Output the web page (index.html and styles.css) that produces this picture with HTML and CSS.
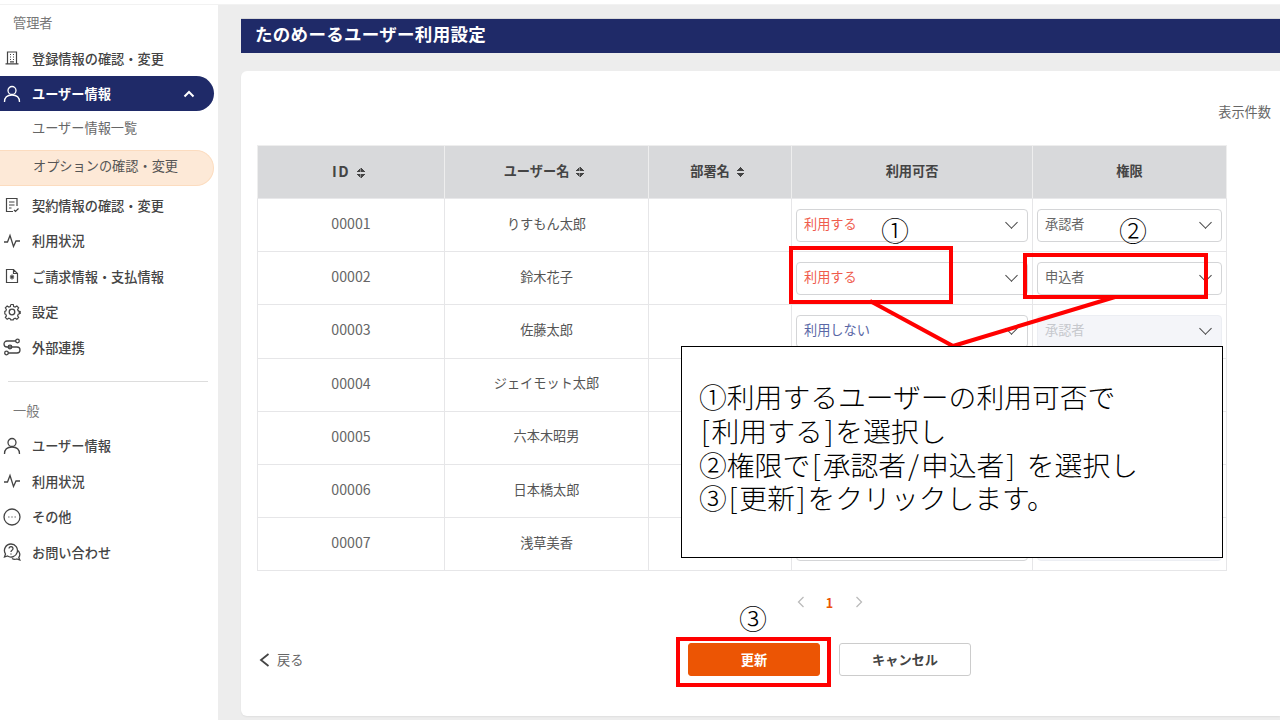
FILE: index.html
```html
<!DOCTYPE html>
<html lang="ja">
<head>
<meta charset="utf-8">
<title>たのめーるユーザー利用設定</title>
<link rel="stylesheet" href="styles.css">
</head>
<body>
<div class="topbar"></div>
<div class="shell">
  <aside class="sidebar">
    <div class="nav-head">管理者</div>
    <a class="nav-item"><svg class="ico" viewBox="0 0 16 16"><path d="M3.500 13.500V2h9v11.500M1.500 13.800h13M6 4.500h1M9 4.500h1M6 7h1M9 7h1M6 9.500h1M9 9.500h1M6 11.800h4"/></svg>登録情報の確認・変更</a>
    <a class="nav-item active"><svg class="ico ico-l" viewBox="0 0 18 18"><circle cx="9" cy="5.500" r="4"/><path d="M1.500 17c0-4.500 3-7 7.500-7s7.500 2.500 7.500 7"/></svg>ユーザー情報<svg class="chev" viewBox="0 0 12 8"><path d="M1.500 6.500 6 2l4.500 4.500"/></svg></a>
    <a class="nav-sub">ユーザー情報一覧</a>
    <a class="nav-sub current">オプションの確認・変更</a>
    <a class="nav-item"><svg class="ico" viewBox="0 0 16 16"><path d="M13 9V1.500H2.500v13H9M5 5h5.500M5 8h5.500M5 11h2.500M10 13l1.500 1.500L14.500 11.500"/></svg>契約情報の確認・変更</a>
    <a class="nav-item"><svg class="ico ico-l" viewBox="0 0 18 18"><path d="M1 10h3.500L7 3.500l3.500 11L13 9h4"/></svg>利用状況</a>
    <a class="nav-item"><svg class="ico" viewBox="0 0 16 16"><path d="M2.500 1.500h7l4 4v9h-11zM9.500 1.500v4h4M8 6.500v5M6 7.800l4 2.400M10 7.800l-4 2.400"/></svg>ご請求情報・支払情報</a>
    <a class="nav-item"><svg class="ico ico-l" viewBox="0 0 18 18"><circle cx="9" cy="9" r="2.800"/><path d="M7.600 1.200h2.800l.4 2.200 1.700.7 1.900-1.200 2 2-1.200 1.900.7 1.700 2.200.4v2.800M16.300 7.800l.4 0M7.600 1.200l-.4 2.200-1.700.7-1.900-1.200-2 2 1.200 1.900-.7 1.700-1.100.4v2.800l1.100.4.700 1.700-1.200 1.900 2 2 1.900-1.200 1.700.7.400 1.100h2.800l.4-1.100 1.700-.7 1.900 1.200 2-2-1.200-1.900.7-1.700 1.100-.4v-2.800" transform="translate(0.900 0.400) scale(.9)"/></svg>設定</a>
    <a class="nav-item"><svg class="ico ico-l" viewBox="0 0 18 18"><path d="M13 3H4a2.500 2.500 0 0 0 0 6h10a2.500 2.500 0 0 1 0 6H5"/><circle cx="14.500" cy="3" r="1.800"/><circle cx="7" cy="9" r="1.800"/><circle cx="3.500" cy="15" r="1.800"/></svg>外部連携</a>
    <hr class="nav-rule">
    <div class="nav-head">一般</div>
    <a class="nav-item"><svg class="ico ico-l" viewBox="0 0 18 18"><circle cx="9" cy="5.500" r="4"/><path d="M1.500 17c0-4.500 3-7 7.500-7s7.500 2.500 7.500 7"/></svg>ユーザー情報</a>
    <a class="nav-item"><svg class="ico ico-l" viewBox="0 0 18 18"><path d="M1 10h3.500L7 3.500l3.500 11L13 9h4"/></svg>利用状況</a>
    <a class="nav-item"><svg class="ico ico-l" viewBox="0 0 18 18"><circle cx="9" cy="9" r="8"/><path d="M5.500 9h.8M8.600 9h.8M11.700 9h.8"/></svg>その他</a>
    <a class="nav-item"><svg class="ico ico-l" viewBox="0 0 18 18"><path d="M8 1a6.500 6.500 0 0 0-5.500 10L1.500 14l3-1A6.500 6.500 0 1 0 8 1zM14.800 7.500a5 5 0 0 1 1 7l1 2.500-3-1a5 5 0 0 1-4.800-.5M6 5.500a2 2 0 1 1 3 1.800c-.7.400-1 .8-1 1.700M8 10.500v1"/></svg>お問い合わせ</a>
  </aside>

  <main class="main">
    <h1 class="banner">たのめーるユーザー利用設定</h1>
    <section class="card">
      <div class="toolbar"><span class="count-label">表示件数</span></div>
      <table class="users">
        <colgroup><col class="c-id"><col class="c-name"><col class="c-dept"><col class="c-use"><col class="c-role"></colgroup>
        <thead>
          <tr>
            <th><span class="id-label">ID</span><span class="sort"></span></th>
            <th>ユーザー名<span class="sort"></span></th>
            <th>部署名<span class="sort"></span></th>
            <th>利用可否</th>
            <th>権限</th>
          </tr>
        </thead>
        <tbody>
          <tr><td>00001</td><td>りすもん太郎</td><td></td><td><div class="select on">利用する</div></td><td><div class="select">承認者</div></td></tr>
          <tr><td>00002</td><td>鈴木花子</td><td></td><td><div class="select on">利用する</div></td><td><div class="select">申込者</div></td></tr>
          <tr><td>00003</td><td>佐藤太郎</td><td></td><td><div class="select off">利用しない</div></td><td><div class="select dis">承認者</div></td></tr>
          <tr><td>00004</td><td>ジェイモット太郎</td><td></td><td><div class="select off">利用しない</div></td><td><div class="select dis">承認者</div></td></tr>
          <tr><td>00005</td><td>六本木昭男</td><td></td><td><div class="select off">利用しない</div></td><td><div class="select dis">承認者</div></td></tr>
          <tr><td>00006</td><td>日本橋太郎</td><td></td><td><div class="select off">利用しない</div></td><td><div class="select dis">承認者</div></td></tr>
          <tr><td>00007</td><td>浅草美香</td><td></td><td><div class="select off">利用しない</div></td><td><div class="select dis">承認者</div></td></tr>
        </tbody>
      </table>
      <nav class="pager">
        <svg class="pg" viewBox="0 0 8 12"><path d="M6.500 1 1.500 6l5 5"/></svg>
        <span class="pg-num">1</span>
        <svg class="pg" viewBox="0 0 8 12"><path d="M1.500 1l5 5-5 5"/></svg>
      </nav>
      <div class="actions">
        <a class="back"><svg class="back-ico" viewBox="0 0 11 14"><path d="M9.500 1 2 7l7.500 6"/></svg>戻る</a>
        <button class="btn primary">更新</button>
        <button class="btn">キャンセル</button>
      </div>
    </section>
  </main>
</div>

<svg class="marks" viewBox="0 0 1280 720">
  <path d="M870 301 953 346 1115 297"/>
  <rect x="791" y="248" width="160" height="54"/>
  <rect x="1025" y="255" width="181" height="42"/>
  <rect x="678" y="639" width="151" height="46"/>
</svg>
<span class="num n1">①</span>
<span class="num n2">②</span>
<span class="num n3">③</span>
<div class="callout">①利用するユーザーの利用可否で<br><span class="sym">[</span>利用する<span class="sym">]</span>を選択し<br>②権限で<span class="sym">[</span>承認者<span class="sym">/</span>申込者<span class="sym">]</span><span class="sym"> </span>を選択し<br>③<span class="sym">[</span>更新<span class="sym">]</span>をクリックします。</div>
</body>
</html>
```
FILE: styles.css
```css
* { box-sizing: border-box; }
html, body { margin: 0; height: 720px; overflow: hidden; }
body {
  background: #ededed;
  font-family: "Noto Sans CJK JP", "Noto Sans", sans-serif;
  font-size: 13.2px;
  color: #444;
}
.topbar { height: 5px; background: #fff; border-bottom: 1px solid #f2f2f2; }
.shell { display: flex; height: 715px; }

/* sidebar */
.sidebar { width: 218px; flex: none; background: #fff; padding-right: 4px; }
.nav-head { height: 35.500px; line-height: 35.500px; padding-left: 13px; color: #777; font-size: 13.200px; }
.nav-item {
  display: flex; align-items: center;
  height: 35.400px; padding: 0 0 0 4px;
  font-weight: 500; color: #444;
}
.ico { width: 16px; height: 16px; flex: none; margin-right: 12px; fill: none; stroke: #444; stroke-width: 1.200; }
.ico-l { width: 18px; height: 18px; margin-left: -1px; margin-right: 11px; stroke-width: 1.300; }
.nav-item.active {
  background: #1f2a68; color: #fff; font-weight: 700;
  border-radius: 0 18px 18px 0;
  position: relative;
}
.nav-item.active .ico { stroke: #fff; }
.chev { width: 12px; height: 8px; position: absolute; right: 19px; top: 14px; fill: none; stroke: #fff; stroke-width: 2; }
.nav-sub {
  display: flex; align-items: center;
  height: 34px; padding: 0 0 2px 32px; color: #666;
}
.nav-sub.current {
  height: 35.500px; margin-top: 5px; margin-bottom: 2px;
  padding: 0 0 5px 33px;
  background: #fde9d7; border: 1px solid #fcdcbf; border-left: 0;
  border-radius: 0 18px 18px 0; color: #555;
}
.nav-rule { border: 0; border-top: 1px solid #ddd; margin: 16px 6px 11px 8px; }

/* main */
.main { flex: 1; min-width: 0; padding: 13px 0 0 23px; }
.banner {
  margin: 0; height: 35px; line-height: 29px; padding-left: 14px;
  background: #1f2a68; color: #fff;
  font-size: 17.500px; font-weight: 700; letter-spacing: .3px;
  border-top: 1px solid #d8d8d8;
}
.card {
  margin-top: 18px; height: 645px;
  background: #fff; border-radius: 6px 0 0 6px;
  padding: 0 0 0 16px;
  box-shadow: 0 1px 2px rgba(0,0,0,.06);
}
.toolbar { height: 74px; display: flex; justify-content: flex-end; padding: 31px 9px 0 0; color: #666; }
.count-label { line-height: 19px; }

/* table */
.users { width: 969px; table-layout: fixed; border-collapse: collapse; text-align: center; }
.c-id { width: 187px; } .c-name { width: 204px; } .c-dept { width: 143px; } .c-use { width: 241px; } .c-role { width: 194px; }
.users th {
  height: 53px; background: #d8d9db; color: #444; font-weight: 700;
  border: 1px solid #eee; border-bottom-color: #e8e8ea; padding: 0 0 4px;
}
.users td {
  height: 53.200px; padding: 0 4px; color: #555;
  border: 1px solid #e6e6e8;
}
.users td:nth-child(-n+2) { padding-bottom: 4px; }
.users td:first-child { font-size: 14.200px; color: #666; }
.id-label { font-size: 14.500px; letter-spacing: 1.500px; }
.sort { display: inline-block; width: 9px; height: 10px; margin: 0 5px 0 6px; vertical-align: -1px;
  background:
    linear-gradient(to bottom right, transparent 50%, #444 50%) 0 0 / 4.500px 4px no-repeat,
    linear-gradient(to bottom left, transparent 50%, #444 50%) 4.500px 0 / 4.500px 4px no-repeat,
    linear-gradient(to top right, transparent 50%, #444 50%) 0 6px / 4.500px 4px no-repeat,
    linear-gradient(to top left, transparent 50%, #444 50%) 4.500px 6px / 4.500px 4px no-repeat;
}
.select {
  position: relative; height: 33px; line-height: 27px; padding-left: 7px; text-align: left;
  background: #fff; border: 1.500px solid #d4d5d7; border-radius: 4px; color: #666;
}
.select::after {
  content: ""; position: absolute; right: 11px; top: 8px; width: 8px; height: 8px;
  border-right: 1.500px solid #444; border-bottom: 1.500px solid #444; transform: rotate(45deg);
}
.select.on { color: #ef5b4c; }
.select.off { color: #5a67a6; }
.select.dis { background: #f4f5f9; color: #c6c8cd; border-color: #eceef3; }

/* footer */
.pager { display: flex; align-items: center; justify-content: center; gap: 21px; width: 1145px; height: 22px; margin-top: 20px; }
.pg { width: 8px; height: 12px; fill: none; stroke: #bbb; stroke-width: 1.300; }
.pg-num { color: #ec5504; font-weight: 700; font-size: 12.500px; width: 8px; text-align: center; }
.actions { display: flex; align-items: center; margin-top: 30px; height: 33px; }
.back { display: flex; align-items: center; color: #666; margin-left: 2px; width: 429px; }
.back-ico { width: 11px; height: 14px; margin-right: 7px; fill: none; stroke: #444; stroke-width: 1.800; }
.btn {
  width: 132px; height: 33px; padding: 0; margin-right: 19px;
  font: 700 13.200px "Noto Sans CJK JP", sans-serif; color: #444;
  background: #fff; border: 1px solid #ccc; border-radius: 3px;
}
.btn.primary { background: #ec5504; border-color: #ec5504; color: #fff; }

/* annotations laid over the screenshot */
.marks { position: absolute; left: 0; top: 0; width: 1280px; height: 720px; fill: none; stroke: #f00; stroke-width: 4; }
.num { position: absolute; font-size: 28px; line-height: 30px; color: #000; font-weight: 300; }
.n1 { left: 881px; top: 215px; }
.n2 { left: 1119px; top: 215px; }
.n3 { left: 739px; top: 603px; }
.callout {
  position: absolute; left: 681px; top: 346px; width: 542px; height: 212px;
  background: #fff; border: 1px solid #000; color: #000;
  padding: 33px 0 0 17px;
  font-size: 27.800px; line-height: 33.800px; font-weight: 300; white-space: pre;
}
.sym { padding: 0 1.900px; }
```
